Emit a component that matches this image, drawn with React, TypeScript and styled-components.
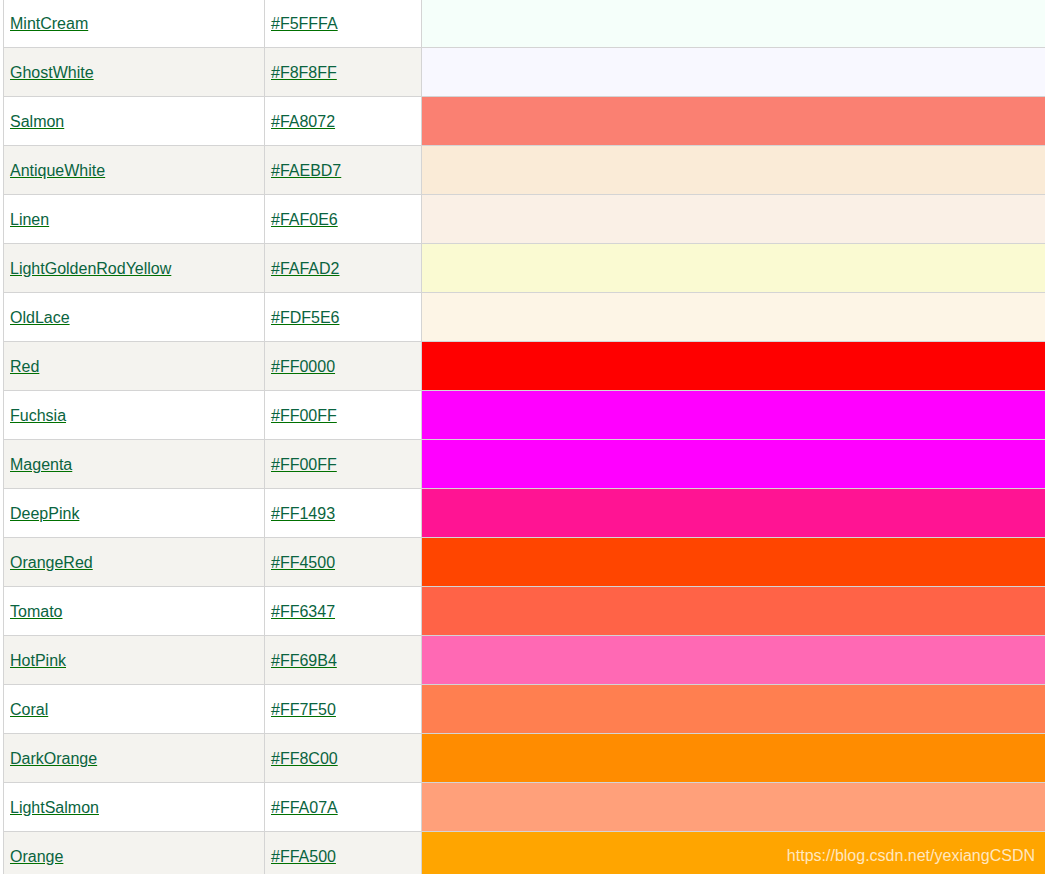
import React from "react";
import styled, { createGlobalStyle } from "styled-components";

interface IColor {
  name: string;
  hex: string;
}

const colors: IColor[] = [
  { name: "MintCream", hex: "#F5FFFA" },
  { name: "GhostWhite", hex: "#F8F8FF" },
  { name: "Salmon", hex: "#FA8072" },
  { name: "AntiqueWhite", hex: "#FAEBD7" },
  { name: "Linen", hex: "#FAF0E6" },
  { name: "LightGoldenRodYellow", hex: "#FAFAD2" },
  { name: "OldLace", hex: "#FDF5E6" },
  { name: "Red", hex: "#FF0000" },
  { name: "Fuchsia", hex: "#FF00FF" },
  { name: "Magenta", hex: "#FF00FF" },
  { name: "DeepPink", hex: "#FF1493" },
  { name: "OrangeRed", hex: "#FF4500" },
  { name: "Tomato", hex: "#FF6347" },
  { name: "HotPink", hex: "#FF69B4" },
  { name: "Coral", hex: "#FF7F50" },
  { name: "DarkOrange", hex: "#FF8C00" },
  { name: "LightSalmon", hex: "#FFA07A" },
  { name: "Orange", hex: "#FFA500" },
];

const GlobalStyle = createGlobalStyle`
  html, body {
    margin: 0;
    padding: 0;
    background: #fff;
    overflow: hidden;
  }
  body {
    font-family: "Liberation Sans", Arial, sans-serif;
    font-size: 16px;
  }
`;

export default function App() {
  return (
    <SPage>
      <GlobalStyle />
      <STable>
        <colgroup>
          <col style={{ width: 261 }} />
          <col style={{ width: 157 }} />
          <col style={{ width: 640 }} />
        </colgroup>
        <tbody>
          {colors.map((color, i) => (
            <SRow key={color.name + i} $striped={i % 2 === 1}>
              <STextCell>
                <SLink href="#">{color.name}</SLink>
              </STextCell>
              <STextCell>
                <SLink href="#">{color.hex}</SLink>
              </STextCell>
              <SSwatch style={{ backgroundColor: color.hex }} />
            </SRow>
          ))}
        </tbody>
      </STable>
      <SWatermark>https://blog.csdn.net/yexiangCSDN</SWatermark>
    </SPage>
  );
}

const SPage = styled.div`
  position: relative;
  width: 1045px;
  height: 874px;
  overflow: hidden;
  padding-left: 3px;
  box-sizing: border-box;
`;

const STable = styled.table`
  border-collapse: collapse;
  table-layout: fixed;
  width: 1058px;
  margin-top: -2px;
`;

const SRow = styled.tr<{ $striped: boolean }>`
  height: 49px;
  background: ${(p) => (p.$striped ? "#f4f3ef" : "#ffffff")};
`;

const STextCell = styled.td`
  border: 1px solid #d4d4d4;
  padding: 2px 6px 0 6px;
  vertical-align: middle;
  line-height: 20px;
`;

const SSwatch = styled.td`
  border: 1px solid #d4d4d4;
  padding: 0;
`;

const SLink = styled.a`
  color: #0a6440;
  text-decoration: underline;
  text-decoration-color: #007000;
`;

const SWatermark = styled.div`
  position: absolute;
  right: 10px;
  bottom: 9px;
  font-size: 16px;
  color: rgba(255, 255, 255, 0.75);
  font-family: "Liberation Sans", Arial, sans-serif;
`;
